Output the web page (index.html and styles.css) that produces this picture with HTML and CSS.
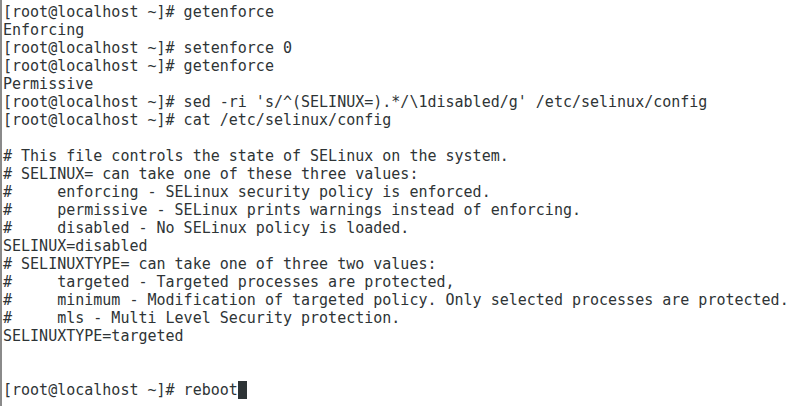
FILE: index.html
```html
<!DOCTYPE html>
<html>
<head>
<meta charset="utf-8">
<link rel="stylesheet" href="styles.css">
</head>
<body>
<div class="term"><pre class="out">[root@localhost ~]# getenforce
Enforcing
[root@localhost ~]# setenforce 0
[root@localhost ~]# getenforce
Permissive
[root@localhost ~]# sed -ri 's/^(SELINUX=).*/\1disabled/g' /etc/selinux/config
[root@localhost ~]# cat /etc/selinux/config

# This file controls the state of SELinux on the system.
# SELINUX= can take one of these three values:
#     enforcing - SELinux security policy is enforced.
#     permissive - SELinux prints warnings instead of enforcing.
#     disabled - No SELinux policy is loaded.
SELINUX=disabled
# SELINUXTYPE= can take one of three two values:
#     targeted - Targeted processes are protected,
#     minimum - Modification of targeted policy. Only selected processes are protected.
#     mls - Multi Level Security protection.
SELINUXTYPE=targeted


[root@localhost ~]# reboot<span class="cursor"> </span></pre></div>
</body>
</html>
```
FILE: styles.css
```css
html, body {
  margin: 0;
  padding: 0;
  background: #ffffff;
}
.term {
  width: 802px;
  height: 406px;
  box-sizing: border-box;
  border-left: 2px solid #8a8a8a;
  padding: 3px 0 0 1px;
  overflow: hidden;
}
.out {
  margin: 0;
  font-family: "DejaVu Sans Mono", monospace;
  font-size: 15px;
  line-height: 18px;
  color: #2e3436;
  white-space: pre;
}
.cursor {
  background: #2e3436;
}
```
